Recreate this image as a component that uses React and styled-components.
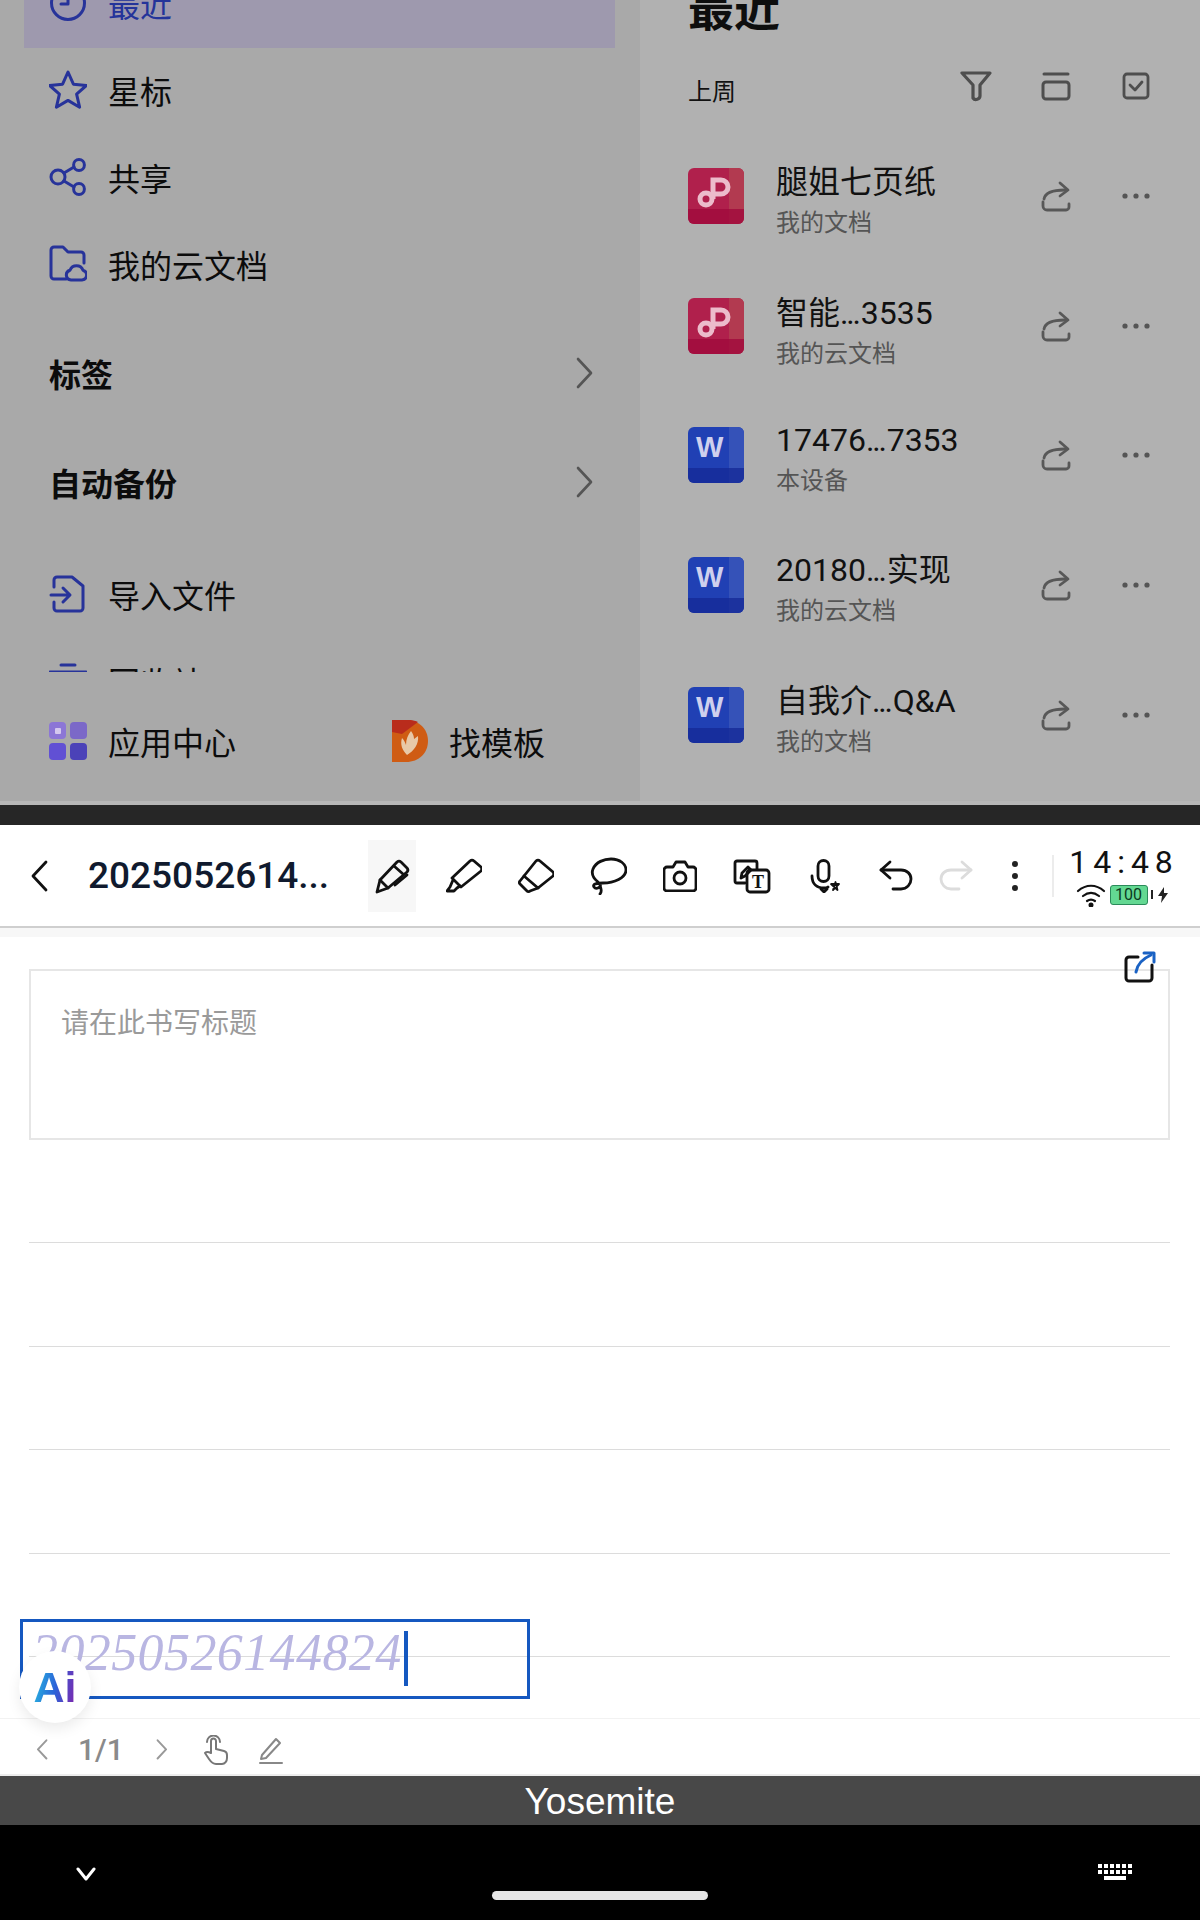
import styled, { createGlobalStyle } from "styled-components";

const GlobalStyle = createGlobalStyle`
  html, body { margin: 0; padding: 0; background: #fff; }
  body { font-family: Roboto, "Noto Sans CJK SC", sans-serif; }
  * { box-sizing: border-box; }
`;

const Page = styled.div`
  width: 1200px;
  height: 1920px;
  display: flex;
  flex-direction: column;
  overflow: hidden;
  position: relative;
`;

const Glyph = styled.svg.attrs((p) => ({
  viewBox: p.$box || "0 0 36 36",
  fill: "none",
  strokeLinecap: "round",
  strokeLinejoin: "round",
}))`
  width: ${(p) => p.$w || 36}px;
  height: ${(p) => p.$h || p.$w || 36}px;
  stroke: ${(p) => p.$color || "#111"};
  stroke-width: ${(p) => p.$sw || 2.8};
  flex: none;
  display: block;
`;

/* ---------- 위쪽 문서 목록 (dimmed) ---------- */

const TopPanel = styled.div`
  height: 805px;
  display: flex;
  border-bottom: 4px solid #b7b7b7;
  overflow: hidden;
`;

const Sidebar = styled.div`
  width: 640px;
  background: #a9a9a9;
  display: flex;
  flex-direction: column;
`;

const NavScroll = styled.div`
  height: 672px;
  overflow: hidden;
`;

const NavInner = styled.div`
  margin-top: -40px;
`;

const NavRow = styled.div`
  height: ${(p) => (p.$active ? 88 : 87)}px;
  margin: 0 25px 0 24px;
  padding: 0 0 3px 25px;
  display: flex;
  align-items: center;
  gap: 21px;
  font-size: 32px;
  color: ${(p) => (p.$active ? "#24349a" : "#0c0c0c")};
  background: ${(p) => (p.$active ? "#9e99ae" : "transparent")};
`;

const SectionRow = styled.div`
  height: 109px;
  margin: 0 46px 0 49px;
  padding-bottom: 6px;
  display: flex;
  align-items: center;
  justify-content: space-between;
  font-size: 32px;
  font-weight: 700;
  color: #0c0c0c;
`;

const Sections = styled.div`
  margin: 12.5px 0 12px;
`;

const BottomLinks = styled.div`
  flex: 1;
  display: flex;
  align-items: center;
  padding: 8px 0 0 49px;
`;

const BottomLink = styled.div`
  width: ${(p) => p.$w}px;
  display: flex;
  align-items: center;
  gap: 21px;
  font-size: 32px;
  color: #0c0c0c;
`;

const FileArea = styled.div`
  flex: 1;
  background: #b1b1b1;
  padding: 0 24px 0 48px;
`;

const PageTitle = styled.div`
  height: 60px;
  margin-top: -20px;
  font-size: 46px;
  line-height: 60px;
  font-weight: 700;
  color: #0e0e0e;
`;

const FilterRow = styled.div`
  height: 91px;
  display: flex;
  align-items: center;
`;

const WeekLabel = styled.div`
  flex: 1;
  padding-top: 8px;
  font-size: 24px;
  color: #111;
`;

const ActionSlot = styled.div`
  width: 80px;
  display: flex;
  justify-content: center;
`;

const FileRow = styled.div`
  height: 129.7px;
  display: flex;
  align-items: center;
`;

const Badge = styled.div`
  width: 56px;
  height: 56px;
  flex: none;
  border-radius: 6px;
  position: relative;
  overflow: hidden;
  background: ${(p) => (p.$kind === "w" ? "#2040b4" : "#b0204c")};
  &::before {
    content: "";
    position: absolute;
    right: 0;
    top: 0;
    bottom: 0;
    width: 15px;
    background: ${(p) => (p.$kind === "w" ? "#3552b8" : "#b23a50")};
  }
  &::after {
    content: "";
    position: absolute;
    left: 0;
    right: 0;
    bottom: 0;
    height: 15px;
    background: ${(p) => (p.$kind === "w" ? "rgba(20,40,150,.75)" : "rgba(160,10,60,.8)")};
  }
`;

const BadgeLetter = styled.span`
  position: absolute;
  z-index: 1;
  left: 8px;
  top: 4px;
  font-family: "Liberation Sans", sans-serif;
  font-weight: 700;
  font-size: 29px;
  line-height: 32px;
  color: #cfd0ee;
`;

const BadgeMark = styled.svg.attrs({ viewBox: "0 0 56 56", fill: "none" })`
  position: absolute;
  z-index: 1;
  inset: 0;
  stroke: #ecbccb;
  stroke-width: 5;
`;

const FileText = styled.div`
  flex: 1;
  margin-left: 32px;
  padding-top: ${(p) => p.$pad}px;
`;

const FileName = styled.div`
  font-size: 32px;
  line-height: 44px;
  color: #111;
`;

const TightDots = styled.span`
  letter-spacing: -2.2px;
  margin-right: 2px;
`;

const FileSub = styled.div`
  margin-top: 2px;
  font-size: 24px;
  line-height: 34px;
  color: #555;
`;

const Divider = styled.div`
  height: 20px;
  background: #262626;
`;

/* ---------- 필기 툴바 ---------- */

const Toolbar = styled.div`
  height: 103px;
  display: flex;
  align-items: center;
  background: #fff;
  border-bottom: 2px solid #cfcfcf;
  padding-left: 30px;
`;

const BackSlot = styled.div`
  width: 58px;
  display: flex;
`;

const DocTitle = styled.div`
  width: 280px;
  font-size: 37px;
  font-weight: 500;
  color: #101a2e;
  white-space: nowrap;
`;

const ToolGroup = styled.div`
  display: flex;
  align-items: center;
  gap: ${(p) => p.$gap}px;
  margin-left: ${(p) => p.$ml || 0}px;
`;

const Tool = styled.div`
  width: 48px;
  height: 72px;
  display: flex;
  align-items: center;
  justify-content: center;
  background: ${(p) => (p.$active ? "#f7f7f7" : "transparent")};
`;

const Separator = styled.div`
  width: 2px;
  height: 42px;
  margin: 0 15px 0 13px;
  background: #ececec;
`;

const StatusBox = styled.div`
  width: 110px;
  display: flex;
  flex-direction: column;
  align-items: center;
`;

const Clock = styled.div`
  font-size: 32px;
  line-height: 34px;
  letter-spacing: 6px;
  color: #111;
  white-space: nowrap;
`;

const StatusLine = styled.div`
  display: flex;
  align-items: center;
  gap: 4px;
  margin: 4px 0 0 -4px;
`;

const Battery = styled.div`
  width: 38px;
  height: 20px;
  border: 1px solid #2b8a5a;
  border-radius: 3px;
  background: #63d892;
  font-size: 16px;
  line-height: 18px;
  text-align: center;
  color: #0b3a20;
`;

const BatteryNub = styled.div`
  width: 2px;
  height: 9px;
  margin-left: -1px;
  background: #222;
`;

const SubStrip = styled.div`
  height: 9px;
  background: #f7f7f7;
`;

/* ---------- 노트 영역 ---------- */

const NoteArea = styled.div`
  position: relative;
  height: 781px;
  padding: 32px 30px 0 29px;
  background: #fff;
`;

const TitleBox = styled.div`
  height: 171px;
  border: 2px solid #e6e6e6;
  padding: 35px 0 0 30px;
  font-size: 28px;
  line-height: 36px;
  color: #9a9a9a;
`;

const RuleLine = styled.div`
  height: 103.4px;
  border-bottom: 1px solid #dcdcdc;
`;

const ExportIcon = styled.div`
  position: absolute;
  left: 1124px;
  top: 14px;
`;

const SelectionBox = styled.div`
  position: absolute;
  left: 20px;
  top: 682px;
  width: 510px;
  height: 80px;
  border: 3px solid #1558c0;
  display: flex;
  padding: 9px 0 0 9px;
`;

const InkText = styled.div`
  font-family: "Liberation Serif", serif;
  font-style: italic;
  font-size: 52px;
  line-height: 44px;
  letter-spacing: 0.4px;
  color: #b9b6e2;
`;

const Caret = styled.div`
  width: 4px;
  height: 55px;
  margin-left: 2px;
  background: #1558c0;
`;

const AiBubble = styled.div`
  position: absolute;
  left: 19px;
  top: 714px;
  width: 72px;
  height: 72px;
  border-radius: 50%;
  background: #fff;
  box-shadow: 0 6px 14px rgba(0, 0, 0, 0.08);
  display: flex;
  align-items: center;
  justify-content: center;
`;

const AiText = styled.span`
  font-family: "Liberation Sans", sans-serif;
  font-size: 43px;
  line-height: 48px;
  font-weight: 700;
  background: linear-gradient(100deg, #25c0e0 0%, #2c62d8 50%, #8a1ea8 100%);
  -webkit-background-clip: text;
  background-clip: text;
  color: transparent;
`;

const PagerBar = styled.div`
  height: 58px;
  display: flex;
  align-items: center;
  padding: 6px 0 0 36px;
  background: #fff;
  border-top: 1px solid #f2f2f2;
  border-bottom: 2px solid #ededed;
`;

const PageCount = styled.div`
  width: 77px;
  margin-left: 29px;
  font-size: 30px;
  font-weight: 500;
  color: #8a8a8a;
`;

const PagerIcons = styled.div`
  display: flex;
  align-items: center;
  gap: 29px;
  margin-left: 35px;
`;

const FontBar = styled.div`
  height: 49px;
  background: #484848;
  color: #fff;
  font-family: "Liberation Sans", sans-serif;
  font-size: 37px;
  line-height: 52px;
  text-align: center;
`;

const NavBar = styled.div`
  flex: 1;
  background: #000;
  position: relative;
  display: flex;
  justify-content: space-between;
  padding: 42px 68px 0 76px;
`;

const HomePill = styled.div`
  position: absolute;
  left: 492px;
  bottom: 20px;
  width: 216px;
  height: 9px;
  border-radius: 5px;
  background: #e6e6e6;
`;

const KeyGrid = styled.div`
  display: grid;
  grid-template-columns: repeat(6, 4px);
  grid-auto-rows: 4px;
  gap: 2px;
  margin-top: -3px;
  height: 16px;
  span {
    background: #fff;
  }
  b {
    grid-column: 2 / 6;
    background: #fff;
  }
`;

/* ---------- 아이콘 ---------- */

const navBlue = "#27339a";
const IconClock = () => (
  <Glyph $w={38} $box="0 0 38 38" $color={navBlue} $sw={3}>
    <circle cx="19" cy="19" r="16.5" />
    <path d="M19 10v10h-7" />
  </Glyph>
);
const IconStar = () => (
  <Glyph $w={38} $h={40} $box="0 0 38 40" $color={navBlue} $sw={3}>
    <path d="M19 2l5.4 12.2 13 1.2-9.8 8.8 3 13L19 30.4 7.4 37.2l3-13-9.8-8.8 13-1.2z" />
  </Glyph>
);
const IconShare = () => (
  <Glyph $w={38} $box="0 0 38 38" $color={navBlue} $sw={3}>
    <circle cx="9" cy="19" r="7" />
    <circle cx="30" cy="7" r="5.4" />
    <circle cx="30" cy="31" r="5.4" />
    <path d="M15 15l10-6M15 23l10 6" />
  </Glyph>
);
const IconCloudFolder = () => (
  <Glyph $w={38} $h={38} $box="0 0 38 38" $color={navBlue} $sw={3}>
    <path d="M17 34H5a3 3 0 0 1-3-3V5a3 3 0 0 1 3-3h9l5 5h13a3 3 0 0 1 3 3v8" />
    <path d="M22 35a5 5 0 0 1-1-9.8 7 7 0 0 1 13 0 5 5 0 0 1-1 9.8z" />
  </Glyph>
);
const IconImport = () => (
  <Glyph $w={38} $h={38} $box="0 0 38 38" $color={navBlue} $sw={3}>
    <path d="M5 12V5a3 3 0 0 1 3-3h15l11 9v22a3 3 0 0 1-3 3H8a3 3 0 0 1-3-3v-6" />
    <path d="M2 20h18M14 13l7 7-7 7" />
  </Glyph>
);
const IconBin = () => (
  <Glyph $w={38} $box="0 0 38 38" $color={navBlue} $sw={3}>
    <path d="M12 3h14M1 10h36M6 10v24h26V10" />
  </Glyph>
);
const IconApps = () => (
  <Glyph $w={38} $box="0 0 38 38" $color="none">
    <rect x="0" y="0" width="17" height="17" rx="4" fill="#8c76d6" />
    <rect x="21" y="0" width="17" height="17" rx="4" fill="#7b68c8" />
    <rect x="0" y="21" width="17" height="17" rx="4" fill="#6150d4" />
    <rect x="21" y="21" width="17" height="17" rx="4" fill="#4b42b8" />
    <rect x="6" y="6" width="6" height="6" rx="1" fill="#d4c8ee" />
  </Glyph>
);
const IconTemplate = () => (
  <Glyph $w={36} $h={42} $box="0 0 36 42" $color="none">
    <path d="M0 0h14c13 0 22 9 22 21s-9 21-22 21H0z" fill="#cf5c14" />
    <path d="M0 0h18c3 0 6 1 8 2L10 14 0 12z" fill="#b92c1c" />
    <path d="M15 35c-5-5-7-11-5-17 2 2 3 4 4 7 0-6 2-10 5-14 2 3 3 5 3 8l4-3c1 8-4 15-11 19z" fill="#e8c9a8" />
  </Glyph>
);
const Chevron = ({ dir = "r", size = 20, color = "#555", sw = 2.6 }) => (
  <Glyph $w={size} $h={size * 1.6} $box="0 0 20 32" $color={color} $sw={sw}>
    <path d={dir === "r" ? "M4 2l13 14L4 30" : "M16 2L3 16l13 14"} />
  </Glyph>
);

const grey = "#4e4e4e";
const IconFilter = () => (
  <Glyph $w={32} $h={32} $box="0 0 32 32" $color={grey} $sw={3.2}>
    <path d="M2 3h28L20 15v11c0 3-5 5-7 2V15z" />
  </Glyph>
);
const IconStack = () => (
  <Glyph $w={30} $h={30} $box="0 0 30 30" $color={grey} $sw={3}>
    <path d="M3 3h24" />
    <rect x="2" y="11" width="26" height="17" rx="3" />
  </Glyph>
);
const IconCheckBox = () => (
  <Glyph $w={28} $h={28} $box="0 0 28 28" $color={grey} $sw={2.8}>
    <rect x="2" y="2" width="24" height="24" rx="3" />
    <path d="M8 13l5 5 7-8" />
  </Glyph>
);
const IconForward = () => (
  <Glyph $w={30} $h={32} $box="0 0 30 32" $color="#585858" $sw={2.8}>
    <path d="M3 19c1-6 8-9 21-9" />
    <path d="M19 3l8 7-8 6" />
    <path d="M2 22v4a4 4 0 0 0 4 4h19a3 3 0 0 0 3-3v-3" />
  </Glyph>
);
const IconDots = () => (
  <Glyph $w={30} $h={6} $box="0 0 30 6" $color="none">
    <circle cx="4" cy="3" r="2.6" fill="#555" />
    <circle cx="15" cy="3" r="2.6" fill="#555" />
    <circle cx="26" cy="3" r="2.6" fill="#555" />
  </Glyph>
);

const IconPencil = () => (
  <Glyph>
    <path d="M3 34l3-12L23 4a3 3 0 0 1 4 0l6 6a3 3 0 0 1 0 4L14 30z" />
    <path d="M6 22l8 8M20 8l9 8M21 27l12-10" />
  </Glyph>
);
const IconMarker = () => (
  <Glyph>
    <path d="M6 20L24 3a3 3 0 0 1 4 0l7 6a3 3 0 0 1 0 4L15 29z" />
    <path d="M7 22l-3 7-3 4h7l3-3 3-2" />
  </Glyph>
);
const IconEraser = () => (
  <Glyph>
    <path d="M6 18L18 3a3 3 0 0 1 4 0l13 11a3 3 0 0 1 0 4L20 30z" />
    <path d="M6 18l-4 5a2 2 0 0 0 0 3l7 7a2 2 0 0 0 3 0l8-3" />
  </Glyph>
);
const IconLasso = () => (
  <Glyph $w={38} $h={38} $box="0 0 38 38">
    <path d="M9 25C4 21 2 17 4 12 7 5 15 2 22 2c9 0 15 5 15 11 0 8-12 13-23 13-6 0-11 1-9 4 2 3 8 0 6-3 0 4 3 7 0 10" />
  </Glyph>
);
const IconCamera = () => (
  <Glyph $w={34} $h={32} $box="0 0 34 32">
    <path d="M4 7h6l3-5h9l3 5h5a3 3 0 0 1 3 3v18a3 3 0 0 1-3 3H4a3 3 0 0 1-3-3V10a3 3 0 0 1 3-3z" />
    <circle cx="17" cy="18" r="6" />
  </Glyph>
);
const IconTextScan = () => (
  <Glyph $w={38} $h={36} $box="0 0 38 36">
    <path d="M12 25H4a2 2 0 0 1-2-2V5a2 2 0 0 1 2-2h18a2 2 0 0 1 2 2v6" />
    <path d="M8 20l1-5 6-6 3 3-6 6z" />
    <rect x="14" y="12" width="22" height="22" rx="3" />
    <text x="25" y="30" textAnchor="middle" fontSize="18" fontFamily="Liberation Serif" fill="#111" stroke="none" fontWeight="700">T</text>
  </Glyph>
);
const IconMic = () => (
  <Glyph $w={34} $h={34} $box="0 0 34 34">
    <rect x="11" y="1.5" width="11" height="21" rx="5.5" />
    <path d="M5 17c0 8 5 12 12 12 2 0 3 0 4-1M14 30l3 3 3-3" />
    <path d="M24 25l8 0-6 6 2.500-8 2 8z" strokeWidth="1.8" />
  </Glyph>
);
const IconUndo = ({ color }) => (
  <Glyph $w={34} $h={32} $box="0 0 34 32" $color={color}>
    <path d="M11 2L2 10l9 8" />
    <path d="M2 10h20c6 0 10 4 10 9s-4 10-10 10h-8" />
  </Glyph>
);
const IconRedo = ({ color }) => (
  <Glyph $w={34} $h={32} $box="0 0 34 32" $color={color}>
    <path d="M23 2l9 8-9 8" />
    <path d="M32 10H12C6 10 2 14 2 19s4 10 10 10h8" />
  </Glyph>
);
const IconVDots = () => (
  <Glyph $w={6} $h={32} $box="0 0 6 32" $color="none">
    <circle cx="3" cy="4" r="3" fill="#222" />
    <circle cx="3" cy="16" r="3" fill="#222" />
    <circle cx="3" cy="28" r="3" fill="#222" />
  </Glyph>
);
const IconWifi = () => (
  <Glyph $w={30} $h={24} $box="0 0 30 24" $sw={2.2}>
    <path d="M2 8c8-7 18-7 26 0M7 13c5-4 11-4 16 0M11 18c3-2 5-2 8 0" />
    <circle cx="15" cy="22" r="1.4" fill="#111" />
  </Glyph>
);
const IconBolt = () => (
  <Glyph $w={12} $h={16} $box="0 0 12 16" $color="none">
    <path d="M7 0L1 9h4l-1 7 7-10H7z" fill="#222" />
  </Glyph>
);
const IconExport = () => (
  <Glyph $w={32} $h={32} $box="0 0 32 32" $sw={3}>
    <path d="M14 6H5a3 3 0 0 0-3 3v18a3 3 0 0 0 3 3h20a3 3 0 0 0 3-3V14" />
    <path d="M12 21c1-7 6-13 15-17" stroke="#1a62c4" />
    <path d="M20 2h10v9" stroke="#1a62c4" />
  </Glyph>
);
const IconHand = () => (
  <Glyph $w={26} $h={30} $box="0 0 26 30" $color="#777" $sw={2}>
    <path d="M8 18V6a2.500 2.500 0 0 1 5 0v8l8 2c2 .5 3 2 3 4v3c0 3-2 6-5 6h-6c-3 0-5-2-7-5l-4-6c2-2 4-1 6 0z" />
    <path d="M4 7a6 6 0 0 1 13 0" />
  </Glyph>
);
const IconPen = () => (
  <Glyph $w={26} $h={28} $box="0 0 26 28" $color="#888" $sw={2}>
    <path d="M4 19L18 3l4 4L8 22l-5 1zM2 27h22" />
  </Glyph>
);

const navItems = [
  { label: "最近", Icon: IconClock, active: true },
  { label: "星标", Icon: IconStar },
  { label: "共享", Icon: IconShare },
  { label: "我的云文档", Icon: IconCloudFolder },
];

const files = [
  { name: "腿姐七页纸", sub: "我的文档", kind: "p", pad: 9 },
  { name: "智能...3535", sub: "我的云文档", kind: "p", pad: 11 },
  { name: "17476...7353", sub: "本设备", kind: "w", pad: 5 },
  { name: "20180...实现", sub: "我的云文档", kind: "w", pad: 6 },
  { name: "自我介...Q&A", sub: "我的文档", kind: "w", pad: 9 },
];

const FileBadge = ({ kind }) => (
  <Badge $kind={kind}>
    {kind === "w" ? (
      <BadgeLetter>W</BadgeLetter>
    ) : (
      <BadgeMark>
        <path d="M25 31V12h8a7 7 0 0 1 0 14h-8" />
        <circle cx="18" cy="31" r="6" />
      </BadgeMark>
    )}
  </Badge>
);

// 파일명의 말줄임표는 원본에서 폭이 좁다
const renderName = (name) => {
  const parts = name.split("...");
  if (parts.length < 2) return name;
  return (
    <>
      {parts[0]}
      <TightDots>...</TightDots>
      {parts[1]}
    </>
  );
};

const App = () => (
  <Page>
    <GlobalStyle />
    <TopPanel>
      <Sidebar>
        <NavScroll>
          <NavInner>
            {navItems.map(({ label, Icon, active }) => (
              <NavRow key={label} $active={active}>
                <Icon />
                {label}
              </NavRow>
            ))}
            <Sections>
              <SectionRow>
                标签
                <Chevron />
              </SectionRow>
              <SectionRow>
                自动备份
                <Chevron />
              </SectionRow>
            </Sections>
            <NavRow>
              <IconImport />
              导入文件
            </NavRow>
            <NavRow>
              <IconBin />
              回收站
            </NavRow>
          </NavInner>
        </NavScroll>
        <BottomLinks>
          <BottomLink $w={343}>
            <IconApps />
            应用中心
          </BottomLink>
          <BottomLink>
            <IconTemplate />
            找模板
          </BottomLink>
        </BottomLinks>
      </Sidebar>

      <FileArea>
        <PageTitle>最近</PageTitle>
        <FilterRow>
          <WeekLabel>上周</WeekLabel>
          <ActionSlot>
            <IconFilter />
          </ActionSlot>
          <ActionSlot>
            <IconStack />
          </ActionSlot>
          <ActionSlot>
            <IconCheckBox />
          </ActionSlot>
        </FilterRow>
        {files.map((f) => (
          <FileRow key={f.name}>
            <FileBadge kind={f.kind} />
            <FileText $pad={f.pad}>
              <FileName>{renderName(f.name)}</FileName>
              <FileSub>{f.sub}</FileSub>
            </FileText>
            <ActionSlot>
              <IconForward />
            </ActionSlot>
            <ActionSlot>
              <IconDots />
            </ActionSlot>
          </FileRow>
        ))}
      </FileArea>
    </TopPanel>

    <Divider />

    <Toolbar>
      <BackSlot>
        <Chevron dir="l" size={20} color="#111" sw={2.8} />
      </BackSlot>
      <DocTitle>2025052614...</DocTitle>
      <ToolGroup $gap={24}>
        <Tool $active>
          <IconPencil />
        </Tool>
        <Tool>
          <IconMarker />
        </Tool>
        <Tool>
          <IconEraser />
        </Tool>
        <Tool>
          <IconLasso />
        </Tool>
        <Tool>
          <IconCamera />
        </Tool>
        <Tool>
          <IconTextScan />
        </Tool>
        <Tool>
          <IconMic />
        </Tool>
        <Tool>
          <IconUndo />
        </Tool>
      </ToolGroup>
      <ToolGroup $gap={11} $ml={12}>
        <Tool>
          <IconRedo color="#dcdcdc" />
        </Tool>
        <Tool>
          <IconVDots />
        </Tool>
      </ToolGroup>
      <Separator />
      <StatusBox>
        <Clock>14:48</Clock>
        <StatusLine>
          <IconWifi />
          <Battery>100</Battery>
          <BatteryNub />
          <IconBolt />
        </StatusLine>
      </StatusBox>
    </Toolbar>
    <SubStrip />

    <NoteArea>
      <TitleBox>请在此书写标题</TitleBox>
      <RuleLine />
      <RuleLine />
      <RuleLine />
      <RuleLine />
      <RuleLine />
      <ExportIcon>
        <IconExport />
      </ExportIcon>
      <SelectionBox>
        <InkText>20250526144824</InkText>
        <Caret />
      </SelectionBox>
      <AiBubble>
        <AiText>Ai</AiText>
      </AiBubble>
    </NoteArea>

    <PagerBar>
      <Chevron dir="l" size={13} color="#999" sw={3} />
      <PageCount>1/1</PageCount>
      <Chevron size={13} color="#999" sw={3} />
      <PagerIcons>
        <IconHand />
        <IconPen />
      </PagerIcons>
    </PagerBar>

    <FontBar>Yosemite</FontBar>

    <NavBar>
      <Glyph $w={20} $h={14} $box="0 0 20 14" $color="#fff" $sw={3}>
        <path d="M2 2l8 10 8-10" />
      </Glyph>
      <KeyGrid>
        {Array.from({ length: 12 }, (_, i) => (
          <span key={i} />
        ))}
        <b />
      </KeyGrid>
      <HomePill />
    </NavBar>
  </Page>
);

export default App;
